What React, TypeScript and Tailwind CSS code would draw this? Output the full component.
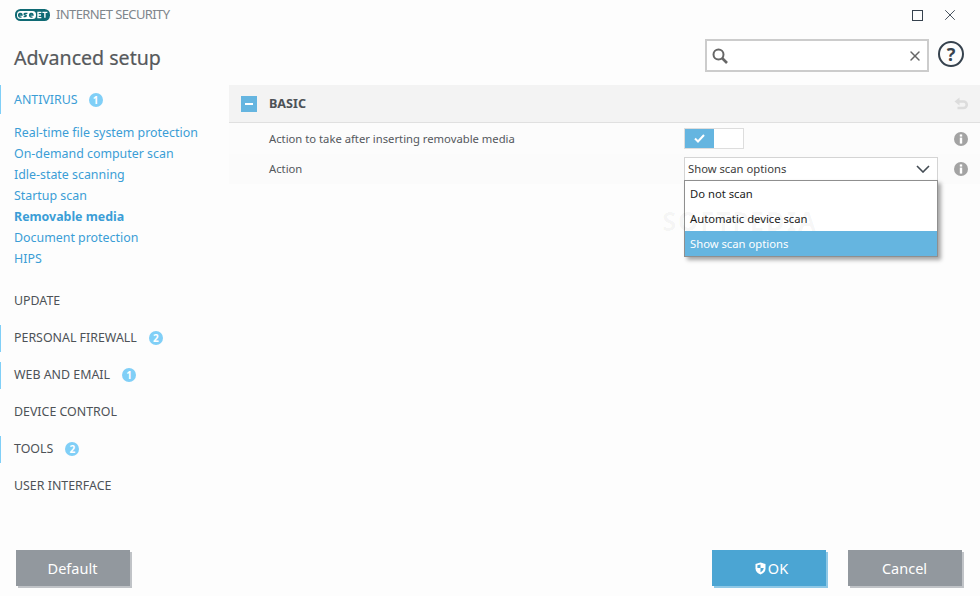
import React from "react";
import { X } from "lucide-react";

const font = "[font-family:'Noto_Sans','Open_Sans',sans-serif]";

const subItems = [
  "Real-time file system protection",
  "On-demand computer scan",
  "Idle-state scanning",
  "Startup scan",
  "Removable media",
  "Document protection",
  "HIPS",
];

const sections = [
  { label: "UPDATE", badge: 0 },
  { label: "PERSONAL FIREWALL", badge: 2 },
  { label: "WEB AND EMAIL", badge: 1 },
  { label: "DEVICE CONTROL", badge: 0 },
  { label: "TOOLS", badge: 2 },
  { label: "USER INTERFACE", badge: 0 },
];

const Badge: React.FC<{ n: number }> = ({ n }) => (
  <span className="-mt-[1px] ml-3 flex h-[14px] w-[14px] items-center justify-center rounded-full bg-[#80cff7] text-[10px] font-bold leading-none text-white">
    {n}
  </span>
);

const InfoIcon: React.FC = () => (
  <svg width="14" height="14" viewBox="0 0 14 14">
    <circle cx="7" cy="7" r="7" fill="#a3a3a3" />
    <rect x="5.8" y="2.4" width="2.4" height="2.2" fill="#fff" />
    <rect x="5.8" y="5.6" width="2.4" height="6" fill="#fff" />
  </svg>
);

const EsetLogo: React.FC = () => (
  <svg width="35" height="12" viewBox="0 0 35 12">
    <rect width="35" height="12" rx="5.5" fill="#0f6a74" />
    <rect x="2" y="2" width="19" height="8" rx="3.5" fill="#fff" />
    <g fill="none" strokeWidth="1.4">
      <path d="M3.6 6h3.4a1.7 1.9 0 1 0-.6 1.7" stroke="#0f6a74" />
      <path d="M12.4 4.4h-2.2c-1.4 0-1.4 1.5 0 1.6s1.4 1.6 0 1.6H8.6" stroke="#0f6a74" />
      <path d="M14.6 6H18a1.7 1.9 0 1 0-.6 1.7" stroke="#0f6a74" />
      <path d="M26.4 3.4h-3.4v5.2h3.4M23 6h3" stroke="#fff" />
      <path d="M27.4 3.4h5M29.9 3.4v5.4" stroke="#fff" />
    </g>
  </svg>
);

const Footer: React.FC<{ children: React.ReactNode; ok?: boolean }> = ({ children, ok }) => (
  <button
    className={`flex h-9 w-[114px] items-center justify-center pt-[1px] text-[14.5px] text-white ${
      ok
        ? "bg-[#4ba5d3] pl-[5px] shadow-[2px_2px_0_#8fc8e6]"
        : "bg-[#92989e] pr-[1px] shadow-[2px_2px_0_#c0c3c7]"
    }`}
  >
    {children}
  </button>
);

export default function App() {
  return (
    <div className={`relative flex h-[596px] w-[980px] flex-col overflow-hidden bg-[#fdfdfd] ${font}`}>
      {/* title bar */}
      <div className="flex h-[30px] items-center pl-[15px] pr-[21px]">
        <EsetLogo />
        <span className="ml-[6px] text-[13px] tracking-[-0.6px] text-[#7f868c]">INTERNET SECURITY</span>
        <div className="ml-auto flex items-center gap-[18px]">
          <span className="h-[11px] w-[11px] border border-[#36424e]" />
          <X size={18} strokeWidth={1.2} className="text-[#36424e]" />
        </div>
      </div>

      {/* heading + search */}
      <div className="flex h-[55px] items-start pl-[14px] pr-[16px]">
        <h1 className="mt-[12px] text-[19.6px] font-normal leading-[32px] text-[#56595c] [-webkit-text-stroke:0.2px_#56595c]">
          Advanced setup
        </h1>
        <div className="ml-auto mt-[9px] flex h-[33px] w-[224px] items-center justify-between border-2 border-[#cccccc] bg-white px-[4px]">
          <svg width="18" height="18" viewBox="0 0 18 18" fill="none">
            <circle cx="7.5" cy="7.5" r="5" stroke="#666" strokeWidth="2" />
            <path d="M11 11l5 5" stroke="#666" strokeWidth="2.6" />
          </svg>
          <X size={16} strokeWidth={2.2} className="text-[#666]" />
        </div>
        <div className="ml-[9px] mt-[11px] flex h-[26px] w-[26px] items-center justify-center rounded-full border-2 border-[#36424e] text-[18px] font-bold leading-none text-[#36424e]">
          ?
        </div>
      </div>

      <div className="flex flex-1">
        {/* sidebar */}
        <nav className="w-[229px] shrink-0 text-[12.4px]">
          <div className="flex h-[29px] items-center border-l border-[#80cff7] pl-[13px] pt-[2px] text-[#3b9dd6]">
            ANTIVIRUS
            <span className="-ml-[1px]"><Badge n={1} /></span>
          </div>
          <ul className="mt-[9px] text-[#3b9dd6]">
            {subItems.map((item) => (
              <li
                key={item}
                className={`flex h-[21px] items-center pl-[14px] ${item === "Removable media" ? "font-bold" : ""}`}
              >
                {item}
              </li>
            ))}
          </ul>
          <div className="mt-[13px] text-[#4d5257]">
            {sections.map((s) => (
              <div key={s.label} className="flex h-[37px] items-center">
                <div
                  className={`flex h-[27px] items-center ${
                    s.badge ? "border-l border-[#80cff7] pl-[13px]" : "pl-[14px]"
                  }`}
                >
                  {s.label}
                  {s.badge ? <Badge n={s.badge} /> : null}
                </div>
              </div>
            ))}
          </div>
        </nav>

        {/* panel */}
        <main className="flex-1 text-[11.25px] text-[#54585c]">
          <div className="flex h-[38px] items-center border-b border-[#e0e0e0] bg-[#f3f3f3] pl-[12px] pr-[12px] pt-[1px]">
            <span className="flex h-4 w-4 items-center justify-center bg-[#65b5e0]">
              <span className="h-[2px] w-[8px] bg-white" />
            </span>
            <span className="ml-[12px] text-[12.6px] font-bold text-[#4d5257]">BASIC</span>
            <svg className="ml-auto" width="14" height="14" viewBox="0 0 14 14" fill="none">
              <path d="M5.5 0.5L0.5 4.5 5.5 8.5z" fill="#dcdcdc" />
              <path d="M3 4.5h6.5a2.8 2.8 0 0 1 0 6.5H3.5" stroke="#dcdcdc" strokeWidth="2.6" />
            </svg>
          </div>
          <div className="flex h-[31px] items-center bg-[#fcfcfc] pl-[40px] pr-[12px]">
            <span className="mt-[2px] w-[415px]">Action to take after inserting removable media</span>
            <div className="flex h-[21px] w-[60px] border border-[#dddddd] bg-white">
              <span className="flex w-[29px] items-center justify-center bg-[#65b5e0]">
                <svg width="11" height="9" viewBox="0 0 11 9" fill="none">
                  <path d="M1 4.5l3 3 6-6.5" stroke="#fff" strokeWidth="2" />
                </svg>
              </span>
            </div>
            <span className="ml-auto"><InfoIcon /></span>
          </div>
          <div className="flex h-[30px] items-center bg-[#fbfbfb] pl-[40px] pr-[12px]">
            <span className="w-[415px]">Action</span>
            <div className="flex h-[24px] w-[254px] items-center justify-between border border-[#d4d4d4] bg-white pl-[3px] pr-[7px] text-[#3c3c3c]">
              Show scan options
              <svg width="14" height="8" viewBox="0 0 14 8" fill="none">
                <path d="M1 1l6 6 6-6" stroke="#444c54" strokeWidth="1.6" />
              </svg>
            </div>
            <span className="ml-auto"><InfoIcon /></span>
          </div>
        </main>
      </div>

      {/* footer */}
      <div className="flex h-[46px] items-start pl-[16px] pr-[18px]">
        <Footer>Default</Footer>
        <div className="ml-auto flex gap-[22px]">
          <Footer ok>
            <svg width="11" height="13" viewBox="0 0 11 13" className="mr-[2px]">
              <path d="M5.5 0.5L10.5 2v4.5c0 3-2.2 5-5 6-2.8-1-5-3-5-6V2z" fill="#fff" />
              <path d="M5.5 2.5v3.5H2.4V3.2zM5.5 6h3.2c-.2 2-1.4 3.4-3.2 4.2z" fill="#4ba5d3" />
            </svg>
            OK
          </Footer>
          <Footer>Cancel</Footer>
        </div>
      </div>

      {/* open dropdown list */}
      <div className="absolute left-[684px] top-[180px] w-[254px] border border-[#8f8f8f] bg-white text-[11.25px] text-[#1c1c1c] shadow-[3px_3px_4px_rgba(0,0,0,0.35)]">
        <div className="flex h-[25px] items-center pl-[5px] pt-[2px]">Do not scan</div>
        <div className="flex h-[25px] items-center pl-[5px] pt-[2px]">Automatic device scan</div>
        <div className="flex h-[25px] items-center bg-[#65b5e0] pl-[5px] pt-[2px] text-white">Show scan options</div>
      </div>

      {/* watermark on top of the list */}
      <div className="pointer-events-none absolute left-[662px] top-[202px] text-[26px] font-bold tracking-[1.5px] text-[#000]/[0.035]">
        SOFTPEDIA
      </div>
    </div>
  );
}
